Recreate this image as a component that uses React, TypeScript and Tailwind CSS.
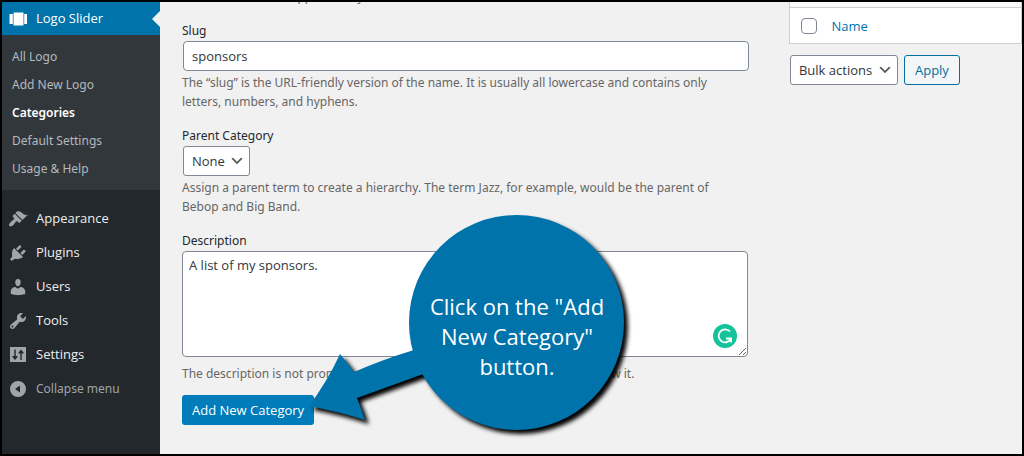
import React from "react";

const menu: { name: string; icon: string }[] = [
  {
    name: "Appearance",
    icon: "M14.48 11.06L7.41 3.99l1.5-1.5c.5-.56 2.3-.47 3.51.32 1.21.8 1.43 1.28 2.91 2.1 1.18.64 2.45 1.26 4.45.85zm-.71.71L6.7 4.7 4.93 6.47c-.39.39-.39 1.02 0 1.41l1.06 1.06c.39.39.39 1.03 0 1.42-.6.6-1.43 1.11-2.21 1.69-.35.26-.7.53-1.01.84C1.43 14.23.4 16.08 1.4 17.07c.99 1 2.84-.03 4.18-1.36.31-.31.58-.66.85-1.02.57-.78 1.08-1.61 1.69-2.21.39-.39 1.02-.39 1.41 0l1.06 1.06c.39.39 1.02.39 1.41 0z",
  },
  {
    name: "Plugins",
    icon: "M13.11 4.36L9.87 7.6 8 5.73l3.24-3.24c.35-.34 1.05-.2 1.56.32.52.51.66 1.21.31 1.55zm-8 1.77l.91-1.12 9.01 9.01-1.19.84c-.71.71-2.63 1.16-3.82 1.16H6.14L4.9 17.26c-.59.59-1.54.59-2.12 0-.59-.58-.59-1.53 0-2.12l1.24-1.24v-3.88c0-1.13.4-3.19 1.09-3.89zm7.26 3.97l3.24-3.24c.34-.35 1.04-.21 1.55.31.52.51.66 1.21.31 1.55l-3.24 3.25z",
  },
  {
    name: "Users",
    icon: "M10 9.25c-2.27 0-2.73-3.44-2.73-3.44C7 4.02 7.82 2 9.97 2c2.16 0 2.98 2.02 2.71 3.81 0 0-.41 3.44-2.68 3.44zm0 2.57L12.72 10c2.39 0 4.52 2.33 4.52 4.53v2.49s-3.65 1.13-7.24 1.13c-3.65 0-7.24-1.13-7.24-1.13v-2.49c0-2.25 1.94-4.48 4.47-4.48z",
  },
  {
    name: "Tools",
    icon: "M16.68 9.77c-1.34 1.34-3.3 1.67-4.95.99l-5.41 6.52c-.99.99-2.59.99-3.58 0s-.99-2.59 0-3.57l6.52-5.42c-.68-1.65-.35-3.61.99-4.95 1.28-1.28 3.12-1.62 4.72-1.06l-2.89 2.89 2.82 2.82 2.86-2.87c.53 1.58.18 3.39-1.08 4.65zM3.81 16.21c.4.39 1.04.39 1.43 0 .4-.4.4-1.04 0-1.43-.39-.4-1.03-.4-1.43 0-.39.39-.39 1.03 0 1.43z",
  },
  {
    name: "Settings",
    icon: "M2 2h16v15H2zM6.300 4.500v6.500H4.500v1l2.500 3 2.500-3v-1H7.700V4.500zM12.300 15h1.400V8.500h1.800v-1L13 4.500l-2.500 3v1h1.800z",
  },
];

const submenu = ["All Logo", "Add New Logo", "Categories", "Default Settings", "Usage & Help"];

function Sidebar() {
  return (
    <nav className="w-[158px] shrink-0 bg-[#23282d] text-[13px] text-[#eeeeee]">
      <a
        href="#logo-slider"
        className="relative flex h-[33px] items-center gap-2 bg-[#0073aa] pl-1.5 text-white"
      >
        <svg className="size-5" viewBox="0 0 20 20" fill="currentColor">
          <path d="M5.500 3.500h10v13h-10zM1.500 5h3.300v10H1.500zM16.200 5h2.800v10h-2.800z" />
        </svg>
        Logo Slider
        <span className="absolute right-0 top-1/2 -translate-y-1/2 border-y-8 border-r-8 border-y-transparent border-r-[#f1f1f1]" />
      </a>
      <ul className="bg-[#32373c] pb-[7px] pl-2.5 pt-2 font-['Noto_Sans',sans-serif] text-xs">
        {submenu.map((name) => (
          <li key={name}>
            <a
              href="#logo"
              aria-current={name === "Categories" ? "page" : undefined}
              className="flex h-7 items-center text-[#b4b9be] aria-[current]:font-semibold aria-[current]:text-white"
            >
              {name}
            </a>
          </li>
        ))}
      </ul>
      <ul className="pt-3">
        {menu.map((each) => (
          <li key={each.name}>
            <a href="#menu" className="flex h-[34px] items-center gap-2 pl-1.5">
              <svg className="size-5 text-[#a0a5aa]" viewBox="0 0 20 20" fill="currentColor">
                <path fillRule="evenodd" d={each.icon} />
              </svg>
              {each.name}
            </a>
          </li>
        ))}
      </ul>
      <button
        type="button"
        className="flex h-[34px] items-center gap-2 pl-1.5 font-['Noto_Sans',sans-serif] text-xs text-[#a0a5aa]"
      >
        <svg className="size-5" viewBox="0 0 20 20" fill="currentColor">
          <path fillRule="evenodd" d="M10 2a8 8 0 1 0 0 16 8 8 0 0 0 0-16zM12 6.500v7L7 10z" />
        </svg>
        Collapse menu
      </button>
    </nav>
  );
}

function Select({ id, label, value }: { id: string; label?: string; value: string }) {
  return (
    <span className="relative inline-block">
      <select
        id={id}
        aria-label={label}
        className="block h-[30px] appearance-none rounded-[3px] border border-[#7e8993] bg-white pl-2 pr-6 pt-0.5 text-[13px] text-[#32373c]"
      >
        <option>{value}</option>
      </select>
      <svg
        className="pointer-events-none absolute right-[5px] top-[7px] size-4"
        viewBox="0 0 20 20"
        fill="#555555"
      >
        <path d="M5 6l5 5 5-5 2 1-7 7-7-7 2-1z" />
      </svg>
    </span>
  );
}

function Help({ children }: { children: React.ReactNode }) {
  return (
    <p className="max-w-[97%] font-['Noto_Sans',sans-serif] text-xs leading-[19px] text-[#666666]">
      {children}
    </p>
  );
}

// round callout with an arrow that points to the submit button
function Callout() {
  return (
    <div className="pointer-events-none absolute left-[124px] top-[-38px] h-[224px] w-[324px]">
      <svg
        className="absolute inset-0 overflow-visible drop-shadow-[4px_4px_2px_#000000]"
        width="324"
        height="224"
        viewBox="306 213 324 224"
        fill="#0073aa"
      >
        <circle cx="516.500" cy="322.500" r="107.500" />
        <path d="M340 354Q346 361 354 372Q384 359 414 350L440 368Q390 386 357 398Q361 408 365 420Q340 412 309 406Q327 382 340 354z" />
      </svg>
      <p className="absolute left-[103px] top-[78px] w-[216px] text-center text-[22px] leading-[30px] text-white">
        Click on the "Add
        <br />
        New Category"
        <br />
        button.
      </p>
    </div>
  );
}

function CategoryForm() {
  return (
    <form className="flex flex-col gap-[15px]">
      <Help>The name is how it appears on your site.</Help>

      <div>
        <label
          htmlFor="slug"
          className="block font-['Noto_Sans',sans-serif] text-xs leading-5"
        >
          Slug
        </label>
        <input
          id="slug"
          type="text"
          defaultValue="sponsors"
          className="mb-0.5 ml-px block h-[30px] w-full rounded-[4px] border border-[#7e8993] bg-white px-2 text-[13px] text-[#32373c]"
        />
        <Help>
          The “slug” is the URL-friendly version of the name. It is usually all lowercase and
          contains only letters, numbers, and hyphens.
        </Help>
      </div>

      <div>
        <label
          htmlFor="parent"
          className="block font-['Noto_Sans',sans-serif] text-xs leading-5"
        >
          Parent Category
        </label>
        <div className="mb-0.5 ml-px flex">
          <Select id="parent" value="None" />
        </div>
        <Help>
          Assign a parent term to create a hierarchy. The term Jazz, for example, would be the
          parent of Bebop and Big Band.
        </Help>
      </div>

      <div>
        <label
          htmlFor="description"
          className="block font-['Noto_Sans',sans-serif] text-xs leading-5"
        >
          Description
        </label>
        <div className="relative mb-[7px]">
          <textarea
            id="description"
            defaultValue="A list of my sponsors."
            className="block h-[106px] w-full resize rounded-[4px] border border-[#7e8993] bg-white px-1.5 py-1 text-[13px] leading-[19px] text-[#32373c]"
          />
          <svg className="absolute bottom-[9px] right-[11px] size-6" viewBox="0 0 24 24">
            <circle cx="12" cy="12" r="12" fill="#15c39a" />
            <path
              d="M17 7.500A6.500 6.500 0 1 0 17.500 15.500M13 14.500h5v4"
              fill="none"
              stroke="#ffffff"
              strokeWidth="1.800"
            />
          </svg>
          <Callout />
        </div>
        <Help>
          The description is not prominent by default; however, some themes may show it.
        </Help>
      </div>

      <button
        type="button"
        className="-mt-[3px] h-[30px] self-start rounded-[3px] bg-[#007cba] px-2.5 pt-0.5 text-[13px] text-white"
      >
        Add New Category
      </button>
    </form>
  );
}

function CategoryTable() {
  return (
    <div>
      <table className="-mt-[29px] w-full border-collapse border border-[#ccd0d4] bg-white text-[13px]">
        <tbody>
          <tr className="h-[34px] bg-[#f9f9f9]">
            <td colSpan={2} />
          </tr>
        </tbody>
        <tfoot>
          <tr className="h-9 border-t border-[#ccd0d4]">
            <td className="w-[42px] pl-[11px]">
              <input
                type="checkbox"
                aria-label="Select all"
                className="block size-4 appearance-none rounded-[4px] border border-[#7e8993] bg-white"
              />
            </td>
            <th className="pt-0.5 text-left font-normal">
              <a href="#name" className="text-[#0073aa]">
                Name
              </a>
            </th>
          </tr>
        </tfoot>
      </table>
      <div className="ml-px mt-[11px] flex gap-1.5">
        <Select id="bulk" label="Bulk actions" value="Bulk actions" />
        <button
          type="button"
          className="h-[30px] rounded-[3px] border border-[#0071a1] bg-[#f3f5f6] px-2.5 pt-0.5 text-[13px] text-[#0071a1]"
        >
          Apply
        </button>
      </div>
    </div>
  );
}

export default function App() {
  return (
    <div className="flex min-h-screen overflow-hidden border-2 border-black bg-[#f1f1f1] font-['Open_Sans',sans-serif] text-[#23282d]">
      <Sidebar />
      <main className="grid flex-1 grid-cols-[17fr_7fr] gap-[41px] overflow-hidden pl-[22px]">
        <div className="-mt-[15px]">
          <CategoryForm />
        </div>
        <CategoryTable />
      </main>
    </div>
  );
}
